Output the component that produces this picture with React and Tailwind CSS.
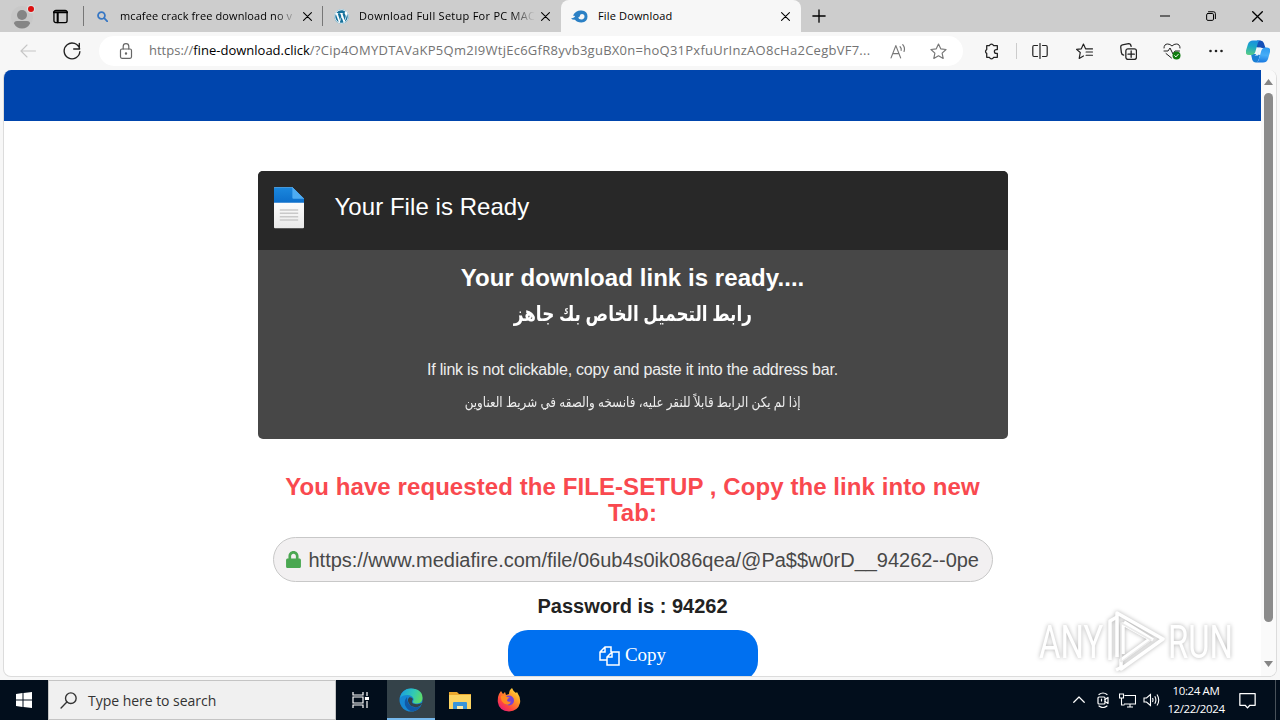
import { FaWordpress, FaLock } from 'react-icons/fa';

const uiFont = "font-['Open_Sans','Noto_Sans',sans-serif]";
const pageFont = "font-['Liberation_Sans','DejaVu_Sans',sans-serif]";

function Icon({ size = 16, className = '', width = 1.1, children }) {
  return (
    <svg
      width={size}
      height={size}
      viewBox="0 0 16 16"
      fill="none"
      stroke="currentColor"
      strokeWidth={width}
      strokeLinecap="round"
      strokeLinejoin="round"
      className={`shrink-0 ${className}`}
    >
      {children}
    </svg>
  );
}

function CloseIcon({ size = 9 }) {
  return (
    <Icon size={size} width={1.9}>
      <path d="M1 1l14 14M15 1L1 15" />
    </Icon>
  );
}

function ProfileIcon() {
  return (
    <svg width="24" height="26" viewBox="0 0 24 26" className="shrink-0">
      <circle cx="11" cy="14" r="11" fill="#c8c8c8" />
      <circle cx="11" cy="12" r="5" fill="#858585" />
      <path d="M3 20.500q0-2.500 3-2.500h10q3 0 3 2.500-2.500 5-8 5t-8-5z" fill="#858585" />
      <circle cx="20" cy="6" r="4.200" fill="#ddd" />
      <circle cx="20" cy="6" r="3" fill="#dc1010" />
    </svg>
  );
}

function FlameIcon() {
  return (
    <svg width="17" height="13" viewBox="0 0 17 13" className="shrink-0">
      <path
        fill="#2b80c5"
        fillRule="evenodd"
        d="M0 8.500Q4 7.500 4 6L2 5.500Q5 0 10.500 0.500Q16.500 1 16.500 6.500Q16.500 12.200 10.500 12.500Q6 12.600 4 9.800Q1.500 10 0 8.500zM7 7.500Q8 9.500 10.500 9.400Q13.500 9.200 13.500 6.500Q13.500 4 11 4Q9 4 8.800 6Q8.500 7.500 7 7.500z"
      />
    </svg>
  );
}

function TabBar() {
  return (
    <div className={`flex h-8 bg-[#cdcdcd] text-[11px] text-black ${uiFont}`}>
      <div className="flex w-[83px] items-center pl-[11px]">
        <ProfileIcon />
        <Icon size={15} width={1.4} className="ml-[18px]">
          <rect x="1" y="1.500" width="14" height="13" rx="2" />
          <path d="M1 3.500h14M5 4v10" strokeWidth="2.200" />
        </Icon>
      </div>
      <div className="my-[6px] w-px bg-[#777]" />
      <div className="flex w-[238px] items-center pl-[13px]">
        <Icon size={11} width={2.600} className="text-[#3777c4]">
          <circle cx="6.500" cy="6.500" r="5" />
          <path d="M10.500 10.500L15 15" />
        </Icon>
        <span className="ml-[12px] w-[177px] overflow-hidden whitespace-nowrap tracking-[0.1px] [mask-image:linear-gradient(to_right,black_155px,transparent_177px)]">
          mcafee crack free download no v
        </span>
        <span className="ml-[6px]">
          <CloseIcon />
        </span>
      </div>
      <div className="my-[6px] w-px bg-[#777]" />
      <div className="flex w-[238px] items-center pl-[11px]">
        <span className="flex rounded-full bg-white text-[#16729c]">
          <FaWordpress size={15} />
        </span>
        <span className="ml-[10px] w-[176px] overflow-hidden whitespace-nowrap tracking-[0.27px] [mask-image:linear-gradient(to_right,black_152px,transparent_176px)]">
          Download Full Setup For PC MAC
        </span>
        <span className="ml-[6px]">
          <CloseIcon />
        </span>
      </div>
      <div className="flex w-[240px] items-center rounded-t-lg bg-[#f7f7f7] pl-[10px]">
        <FlameIcon />
        <span className="ml-[10px] w-[177px] whitespace-nowrap tracking-[0.15px]">File Download</span>
        <span className="ml-[6px]">
          <CloseIcon />
        </span>
      </div>
      <div className="flex w-9 items-center justify-center">
        <Icon size={14} width={1.500}>
          <path d="M8 1v14M1 8h14" />
        </Icon>
      </div>
      <div className="ml-auto flex items-center">
        <div className="flex w-[46px] justify-center">
          <Icon size={10} width={1.700}>
            <path d="M0.500 8h15" />
          </Icon>
        </div>
        <div className="flex w-[46px] justify-center">
          <Icon size={10} width={1.600}>
            <rect x="1" y="4" width="11" height="11" rx="2" />
            <path d="M4 1.200h8q3 0 3 3v8" />
          </Icon>
        </div>
        <div className="flex w-[46px] justify-center">
          <CloseIcon size={11} />
        </div>
      </div>
    </div>
  );
}

function CopilotLogo() {
  return (
    <svg width="24" height="23" viewBox="0 0 24 23" className="shrink-0">
      <defs>
        <linearGradient id="copilotLeft" x1="0.500" y1="0" x2="0.300" y2="1">
          <stop offset="0" stopColor="#1c8fe0" />
          <stop offset="0.400" stopColor="#1ba6c8" />
          <stop offset="1" stopColor="#58cc86" />
        </linearGradient>
        <linearGradient id="copilotRight" x1="0.500" y1="0" x2="0.400" y2="1">
          <stop offset="0" stopColor="#2f9bf0" />
          <stop offset="0.500" stopColor="#46adf7" />
          <stop offset="1" stopColor="#1878e0" />
        </linearGradient>
      </defs>
      <path d="M11 .500h3.500q2.500 0 3.300 2.500l1.700 5h-5L10 7z" fill="#1550b8" />
      <path d="M5 14h5l4 1-1.500 5q-.800 2.500-2.500 2.500-3 0-3.800-3z" fill="#1a7fd4" />
      <path d="M7 .500h8q-2.500 0-3.300 3L9.300 12q-1 3-4 3H3q-4 0-3-4.500L2 4q1.200-3.500 5-3.500z" fill="url(#copilotLeft)" />
      <path d="M17 22.500H9.500q2.500 0 3.300-3l2.400-8.500q1-3.500 4-3.500H21q4 0 3 4.500L22 19q-1.200 3.500-5 3.500z" fill="url(#copilotRight)" />
      <path d="M12.500 7.500h3l-3.500 8H8.500q1.500-.500 2-2z" fill="#e9f6fb" />
    </svg>
  );
}

function Slot({ children }) {
  return <div className="flex w-11 justify-center">{children}</div>;
}

function Toolbar() {
  return (
    <div className={`flex h-[38px] items-center bg-[#f7f7f7] text-[#222] ${uiFont}`}>
      <div className="flex w-[99px] items-center pl-[20px]">
        <Icon size={16} className="text-[#c6c6c6]">
          <path d="M15.500 8H1M7 2L1 8l6 6" />
        </Icon>
        <Icon size={18} width={1.200} className="ml-[27px]">
          <path d="M14.800 6.200A7 7 0 1 0 15 8.500M14.500 1.200v5h-5" />
        </Icon>
      </div>
      <div className="flex h-[30px] w-[864px] items-center rounded-full bg-white pl-[19px]">
        <Icon size={16} width={1.200} className="text-[#666]">
          <rect x="2.500" y="6" width="11" height="9.300" rx="1.500" />
          <path d="M5.200 6V3.500a2.800 2.800 0 0 1 5.600 0V6" />
          <circle cx="8" cy="10.500" r="0.600" fill="currentColor" />
        </Icon>
        <div className="ml-[15px] w-[723px] whitespace-nowrap text-[13px] text-[#737373]">
          https://<span className="text-black">fine-download.click</span>
          <span className="tracking-[0.26px]">
            /?Cip4OMYDTAVaKP5Qm2I9WtjEc6GfR8yvb3guBX0n=hoQ31PxfuUrInzAO8cHa2CegbVF7...
          </span>
        </div>
        <Icon size={17} className="ml-[18px] text-[#777]">
          <path d="M1 14L5.500 2.500 10 14M2.700 10h5.700M9.500 3.500q1.500 1.500 1 3.500M12 1.500q2.500 3 1.200 6.500" />
        </Icon>
        <Icon size={17} className="ml-[23px] text-[#777]">
          <path d="M8 1l2.100 4.500 5 .600-3.700 3.400 1 5L8 12l-4.400 2.500 1-5L.900 6.100l5-.600z" />
        </Icon>
      </div>
      <div className="flex w-[53px] justify-center pl-[3px]">
        <Icon size={17} width={1.200}>
          <path d="M3.500 2.500h2.600a2 2 0 0 1 3.800 0h3.600v3.700h-1a1.800 1.800 0 0 0 0 3.600h1v3.700H9.900a2 2 0 0 1-3.800 0H3.500V9.800a2 2 0 0 1 0-3.600z" />
        </Icon>
      </div>
      <div className="mr-px h-4 w-px bg-[#ccc]" />
      <Slot>
        <Icon size={16} width={1.200}>
          <path d="M8 .500v15M5.500 2.500H2Q.800 2.500.800 4v8q0 1.500 1.200 1.500h3.500M10.500 2.500H14q1.200 0 1.200 1.500v8q0 1.500-1.200 1.500h-3.500" />
        </Icon>
      </Slot>
      <Slot>
        <Icon size={17}>
          <path d="M9 5.500L7 1 5 5.500.500 6 4 9l-1 5.500 4-2.300M9 5.500h6.500M9.500 8.500h6M9.500 11.500h6" />
        </Icon>
      </Slot>
      <Slot>
        <Icon size={17} width={1.200}>
          <rect x="5.500" y="5.500" width="10" height="10" rx="2" />
          <path d="M10.500 7.500v6M7.500 10.500h6M3.500 11.500Q1.500 11 1.300 9L.700 4Q.500 2 2.300 1.700L8 .700q2-.200 2.500 2.500" />
        </Icon>
      </Slot>
      <Slot>
        <svg width="18" height="17" viewBox="0 0 18 17" fill="none" stroke="#222" strokeLinecap="round" strokeLinejoin="round">
          <path d="M1 5Q1 1 4.700 1 7 1 9 3q2-2 4.300-2Q17 1 17 5M1 8h4l2-3 3 6 2-3h4.500M3 10.500L8.500 15" />
          <circle cx="13.500" cy="12.500" r="4" fill="#107c10" stroke="none" />
          <path d="M11.700 12.700l1.200 1.200 2.300-2.500" stroke="white" />
        </svg>
      </Slot>
      <Slot>
        <svg width="16" height="16" viewBox="0 0 16 16" fill="#222">
          <circle cx="2.500" cy="8" r="1.300" />
          <circle cx="8" cy="8" r="1.300" />
          <circle cx="13.500" cy="8" r="1.300" />
        </svg>
      </Slot>
      <div className="ml-[8px]">
        <CopilotLogo />
      </div>
    </div>
  );
}

function FileIcon() {
  return (
    <svg width="30" height="42" viewBox="0 0 31 43" className="shrink-0">
      <defs>
        <linearGradient id="paper" x1="0" y1="0" x2="0" y2="1">
          <stop offset="0.300" stopColor="#fff" />
          <stop offset="1" stopColor="#e9e9e9" />
        </linearGradient>
        <linearGradient id="cap" x1="0" y1="0" x2="0" y2="1">
          <stop offset="0" stopColor="#1b88de" />
          <stop offset="1" stopColor="#0d6fcb" />
        </linearGradient>
      </defs>
      <path d="M0 1q0-1 1-1h18l12 12v29.500q0 1-1 1H1q-1 0-1-1z" fill="url(#paper)" />
      <path d="M0 1q0-1 1-1h18l12 12v4H0z" fill="url(#cap)" />
      <path d="M19 0l12 12H20q-1 0-1-1z" fill="#4eacf2" />
      <path d="M6 23.500h19M6 27h19M6 30.500h19M6 34h19" stroke="#c9c9c9" strokeWidth="1.600" />
    </svg>
  );
}

function ReadyCard() {
  return (
    <div className="mt-[50px] h-[268px] w-[750px] shrink-0 overflow-hidden rounded-[5px] bg-[#474747] text-white">
      <div className="flex h-[79px] items-start bg-[#282828] pt-4 pl-4">
        <FileIcon />
        <h1 className="ml-[31px] mt-[2px] text-[24px] leading-9 whitespace-nowrap tracking-[0.05px]">Your File is Ready</h1>
      </div>
      <div className="flex flex-col items-center whitespace-nowrap">
        <h2 className="mt-[10px] text-[24px] leading-9 font-bold tracking-[0.06px]">Your download link is ready....</h2>
        <p dir="rtl" className="h-9 scale-x-[0.8] text-[21px] leading-9 font-bold">رابط التحميل الخاص بك جاهز</p>
        <p className="mt-[22px] text-[16px] leading-8 tracking-[-0.22px] text-[#eee]">
          If link is not clickable, copy and paste it into the address bar.
        </p>
        <p dir="rtl" className="h-8 scale-x-[0.85] text-[14px] leading-8 text-[#eee]">
          إذا لم يكن الرابط قابلاً للنقر عليه، فانسخه والصقه في شريط العناوين
        </p>
      </div>
    </div>
  );
}

function DownloadLink() {
  return (
    <div className="mt-[35px] flex w-[720px] shrink-0 flex-col items-center">
      <h2 className="text-center text-[24px] leading-[26px] font-bold tracking-[0.08px] text-[#f9494f]">
        You have requested the FILE-SETUP , Copy the link into new
        <br />
        Tab:
      </h2>
      <div className="mt-[11px] flex h-[45px] w-full items-center rounded-full border border-[#c8c8c8] bg-[#f2f0f1] pl-[11px] whitespace-nowrap">
        <FaLock size={17} className="shrink-0 text-[#4aa751]" />
        <span className="ml-[7px] text-[20px] tracking-[-0.02px] text-[#484848]">
          https://www.mediafire.com/file/06ub4s0ik086qea/@Pa$$w0rD__94262--0pe
        </span>
      </div>
      <p className="mt-[9px] text-[20px] leading-[30px] font-bold text-[#222]">Password is : 94262</p>
      <button className="mt-[9px] flex h-[51px] w-[250px] items-center justify-center rounded-[20px] bg-[#0070f0] font-['Liberation_Serif',serif] text-[19px] text-white">
        <svg width="21" height="20" viewBox="0 0 21 20" fill="none" stroke="white" strokeWidth="1.500" className="mr-[5px]">
          <path d="M8 14H1V6l5-5h6v5M6 1v5H1M13 6h7v13H8v-8zM13 6v5H8" />
        </svg>
        Copy
      </button>
    </div>
  );
}

function Scrollbar() {
  return (
    <div className="flex w-[15px] flex-col items-center bg-[#fafafa]">
      <svg width="9" height="6" viewBox="0 0 9 6" className="mt-[9px]">
        <path d="M0 6L4.500 0 9 6z" fill="#858585" />
      </svg>
      <div className="mt-2 h-[529px] w-[9px] rounded-full bg-[#8b8b8b]" />
      <svg width="9" height="6" viewBox="0 0 9 6" className="mt-[39px]">
        <path d="M0 0l4.500 6L9 0z" fill="#858585" />
      </svg>
    </div>
  );
}

// translucent overlay in the corner of the recording
function Watermark() {
  return (
    <div className="absolute top-[609px] left-[1039px] flex h-[64px] w-[196px] items-center font-['Roboto',sans-serif] text-[47px] leading-none text-white drop-shadow-[0_0_2px_rgba(0,0,0,0.3)]">
      <div className="w-[66px]">
        <span className="inline-block origin-left scale-x-[0.7]">ANY</span>
      </div>
      <svg width="60" height="64" viewBox="0 0 60 64" fill="none" stroke="white" strokeWidth="3.500" strokeLinejoin="round" className="shrink-0">
        <path d="M12 48V4l46 26-42 30v-9l29-21-27-15v30" />
        <path d="M12 8l-7 4v39M19 13l29 18M17 58l-6 3" />
        <path d="M16 53V14l30 17-30 22" stroke="#eaeaea" strokeWidth="1.500" />
      </svg>
      <span className="ml-[3px] inline-block origin-left scale-x-[0.7]">RUN</span>
    </div>
  );
}

function EdgeLogo() {
  return (
    <svg width="24" height="24" viewBox="0 0 24 24">
      <defs>
        <linearGradient id="edgeTop" x1="0" y1="0.300" x2="1" y2="0.600">
          <stop offset="0" stopColor="#1a9fe0" />
          <stop offset="0.550" stopColor="#31c9b5" />
          <stop offset="1" stopColor="#5fdc65" />
        </linearGradient>
      </defs>
      <circle cx="12" cy="12" r="11.500" fill="#1687d3" />
      <path d="M1 10Q3 .500 12 .500 23.500 1 23.500 10q0 5-5.500 5.500-4.500 0-4-2 1-1.500.500-3Q13 7 8.500 7 3 7 1 10z" fill="url(#edgeTop)" />
      <path d="M8 9q-4 5-1 10 3 4.500 7 4.300 5-.500 8-5-5 2-9 .200Q8 16 8 9z" fill="#1159a6" />
      <path d="M14 15.500q-2-1 0-4.500-1-2-3.500-1.800Q8 11 9.500 14.500q2.500 5.500 9 4.500 3-.500 5-4.500-4 3-9.500 1z" fill="#34424a" />
    </svg>
  );
}

function FirefoxLogo() {
  return (
    <svg width="24" height="24" viewBox="0 0 24 24">
      <defs>
        <linearGradient id="fox" x1="1" y1="0" x2="0.200" y2="1">
          <stop offset="0" stopColor="#fff24a" />
          <stop offset="0.400" stopColor="#ff9b25" />
          <stop offset="0.750" stopColor="#ff453e" />
          <stop offset="1" stopColor="#e5197e" />
        </linearGradient>
      </defs>
      <path d="M2 6l2-3 2 3 2-2 1 3 3-1Q12 2 15 0q1 3 4 5l1-1q4 6 3 11-2 8-11 8.500Q2 23 .800 14 .500 9 2 6z" fill="url(#fox)" />
      <circle cx="12" cy="12.500" r="5" fill="#7543d4" />
      <path d="M4 8q4-2 6 1l3 .500q-3 1-3 3 1 2 4 1-2 5-7 2-4-3-3-7.500z" fill="#ff8a20" />
    </svg>
  );
}

function FolderLogo() {
  return (
    <svg width="22" height="19" viewBox="0 0 22 19">
      <path d="M0 1h8l2 2h12v15H0z" fill="#eba82d" />
      <path d="M0 4h22v14H0z" fill="#fcd462" />
      <path d="M4 18v-6q0-1 1-1h12q1 0 1 1v6h-4v-3H8v3z" fill="#3894d8" />
      <path d="M8 15h6v3H8z" fill="#fae9a7" />
    </svg>
  );
}

function Taskbar() {
  return (
    <div className={`flex h-10 bg-[#020e1c] text-white ${uiFont}`}>
      <div className="flex w-12 items-center justify-center">
        <svg width="16" height="16" viewBox="0 0 16 16" fill="white">
          <path d="M0 2l6.500-1v6.500H0zM7.500.900L16 0v7.500H7.500zM0 8.500h6.500V15L0 14zM7.500 8.500H16V16l-8.500-1z" />
        </svg>
      </div>
      <div className="flex w-[288px] items-center border border-[#c4c4c4] bg-[#f0f0f0] pl-[11px] text-[#333]">
        <Icon size={17} width={1.300}>
          <circle cx="10.200" cy="5.800" r="5" />
          <path d="M6.500 9.500L1 15" />
        </Icon>
        <span className="ml-[11px] text-[14px] tracking-[-0.03px]">Type here to search</span>
      </div>
      <div className="flex w-[51px] items-center justify-center pr-[3px]">
        <svg width="17" height="16" viewBox="0 0 17 16" fill="none" stroke="white" strokeWidth="1.200">
          <path d="M1 0v3h10V0M1 16v-3h10v3M1 5h10v6H1zM15 0v4M15 9v7" />
          <path d="M13.500 5.500h3v2h-3z" fill="white" />
        </svg>
      </div>
      <div className="flex w-12 items-center justify-center border-b-2 border-[#76b9ed] bg-[#344249] pt-[2px]">
        <EdgeLogo />
      </div>
      <div className="flex w-[49px] items-center justify-center">
        <FolderLogo />
      </div>
      <div className="flex w-[49px] items-center justify-center">
        <FirefoxLogo />
      </div>
      <div className="ml-auto flex items-center">
        <Icon size={12} width={1.600}>
          <path d="M1 11l7-7 7 7" />
        </Icon>
        <Icon size={16} width={1.200} className="ml-[10px]">
          <rect x="3" y="5" width="7" height="7" rx="1" />
          <path d="M10 7.500l3-2v6l-3-2M4 2.500Q8-.500 12 2.500M4 14q4 3 8 0M6.500 7v2" />
        </Icon>
        <svg width="17" height="15" viewBox="0 0 17 15" fill="none" stroke="white" strokeWidth="1.100" className="ml-[8px]">
          <path d="M5.500 2.500h11v8.500H5M8 14h6M11 11v3M.500 1h4v4h-4zM2.500 5v7h3" />
        </svg>
        <svg width="17" height="14" viewBox="0 0 17 14" fill="none" stroke="white" strokeWidth="1.100" className="ml-[7px]">
          <path d="M1 5h2.500l4-3.500v11L3.500 9H1zM9.500 5q1 2 0 4M11.800 3.200q2.200 3.800 0 7.600M14 1.500q3.500 5.500 0 11" />
        </svg>
        <div className="ml-[6px] w-[60px] text-center text-[11.500px] leading-[18px] whitespace-nowrap tracking-[-0.38px]">
          <p>10:24 AM</p>
          <p>12/22/2024</p>
        </div>
        <Icon size={17} width={1.200} className="ml-[13px]">
          <path d="M.800 1.500h14.400v11h-5L8 15l-2.200-2.500h-5z" />
        </Icon>
        <div className="ml-[19px] h-10 w-px bg-[#48515a]" />
        <div className="w-1" />
      </div>
    </div>
  );
}

function App() {
  return (
    <div className="relative flex h-[720px] w-[1280px] flex-col overflow-hidden bg-[#f7f7f7]">
      <TabBar />
      <Toolbar />
      <div className="mx-[3px] mb-[3px] flex h-[607px] overflow-hidden rounded-lg border border-t-0 border-[#dcdcdc] bg-white">
        <main className={`flex w-[1257px] shrink-0 flex-col items-center ${pageFont}`}>
          <div className="h-[51px] w-full shrink-0 bg-[#0045ad]" />
          <ReadyCard />
          <DownloadLink />
        </main>
        <Scrollbar />
      </div>
      <Taskbar />
      <Watermark />
    </div>
  );
}

export default App;
